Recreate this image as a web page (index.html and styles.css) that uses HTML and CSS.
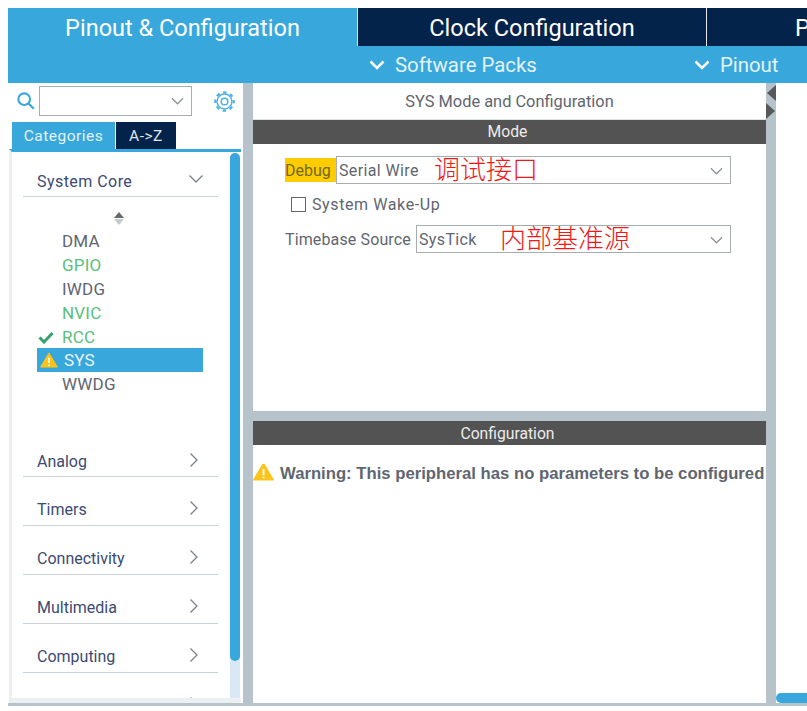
FILE: index.html
```html
<!DOCTYPE html>
<html lang="en">
<head>
<meta charset="utf-8">
<title>SYS Mode and Configuration</title>
<link rel="stylesheet" href="styles.css">
</head>
<body>
<div class="app">
  <header class="header">
    <nav class="tabs">
      <div class="tab tab-active">Pinout &amp; Configuration</div>
      <div class="tab tab-dark">Clock Configuration</div>
      <div class="tab tab-dark tab-clip">Project Manager</div>
    </nav>
    <div class="subbar">
      <div class="sub-item sub-packs"><svg class="sub-chev" viewBox="0 0 16 10"><path d="M1.500 1.500 8 8l6.500-6.500"/></svg>Software Packs</div>
      <div class="sub-item sub-pinout"><svg class="sub-chev" viewBox="0 0 16 10"><path d="M1.500 1.500 8 8l6.500-6.500"/></svg>Pinout</div>
    </div>
  </header>
  <main class="main">
    <aside class="left">
      <div class="search-row">
        <svg class="search-icon" viewBox="0 0 20 20"><circle cx="8" cy="8" r="6.500"/><path d="m12.700 12.700 6 6"/></svg>
        <div class="search-box"><svg class="chev-down" viewBox="0 0 14 8"><path d="M1 1l6 6 6-6"/></svg></div>
        <svg class="gear" viewBox="0 0 24 24"><circle class="gear-teeth" cx="12" cy="12" r="10.500"/><circle cx="12" cy="12" r="8.500"/><circle cx="12" cy="12" r="3.800"/></svg>
      </div>
      <div class="view-tabs">
        <div class="view-tab view-on">Categories</div>
        <div class="view-tab view-off">A-&gt;Z</div>
      </div>
      <div class="panel">
        <div class="list">
          <div class="cat cat-open"><span>System Core</span><svg class="cat-down" viewBox="0 0 14 8"><path d="M.5.500 7 7l6.500-6.500"/></svg></div>
          <div class="sorter"><i class="sort-up"></i><i class="sort-down"></i></div>
          <ul class="items">
            <li class="item">DMA</li>
            <li class="item item-green">GPIO</li>
            <li class="item">IWDG</li>
            <li class="item item-green">NVIC</li>
            <li class="item item-green"><svg class="check" viewBox="0 0 16 13"><path d="M1.500 6.500 6 11l8.500-9"/></svg>RCC</li>
            <li class="item item-sel"><svg class="warn-small" viewBox="0 0 20 18"><path class="warn-body" d="M10 1 19.500 17H.5z"/><path class="warn-mark" d="M10 6.500v6M10 14v1.500"/></svg>SYS</li>
            <li class="item">WWDG</li>
          </ul>
          <div class="cat cat-first"><span>Analog</span><svg class="cat-right" viewBox="0 0 8 14"><path d="M.5.500 7 7 .5 13.500"/></svg></div>
          <div class="cat"><span>Timers</span><svg class="cat-right" viewBox="0 0 8 14"><path d="M.5.500 7 7 .5 13.500"/></svg></div>
          <div class="cat"><span>Connectivity</span><svg class="cat-right" viewBox="0 0 8 14"><path d="M.5.500 7 7 .5 13.500"/></svg></div>
          <div class="cat"><span>Multimedia</span><svg class="cat-right" viewBox="0 0 8 14"><path d="M.5.500 7 7 .5 13.500"/></svg></div>
          <div class="cat"><span>Computing</span><svg class="cat-right" viewBox="0 0 8 14"><path d="M.5.500 7 7 .5 13.500"/></svg></div>
          <div class="cat"><span></span><svg class="cat-right" viewBox="0 0 8 14"><path d="M.5.500 7 7 .5 13.500"/></svg></div>
        </div>
        <div class="scroll"><div class="scroll-thumb"></div></div>
      </div>
    </aside>
    <div class="divider"></div>
    <section class="center">
      <div class="mode-pane">
        <div class="pane-title">SYS Mode and Configuration</div>
        <div class="bar">Mode</div>
        <div class="form">
          <div class="form-row row-debug">
            <label class="debug-label">Debug</label>
            <div class="select select-debug">Serial Wire<span class="note note-debug">调试接口</span><svg class="chev-down" viewBox="0 0 14 8"><path d="M1 1l6 6 6-6"/></svg></div>
          </div>
          <div class="form-row row-check">
            <span class="checkbox"></span><span>System Wake-Up</span>
          </div>
          <div class="form-row row-time">
            <label class="time-label">Timebase Source</label>
            <div class="select select-time">SysTick<span class="note note-time">内部基准源</span><svg class="chev-down" viewBox="0 0 14 8"><path d="M1 1l6 6 6-6"/></svg></div>
          </div>
        </div>
      </div>
      <div class="hsplit"></div>
      <div class="config-pane">
        <div class="bar">Configuration</div>
        <div class="warning"><svg class="warn-big" viewBox="0 0 20 18"><path class="warn-body" d="M10 1 19.500 17H.5z"/><path class="warn-mark" d="M10 6.500v6M10 14v1.500"/></svg><span>Warning: This peripheral has no parameters to be configured</span></div>
      </div>
    </section>
    <div class="divider divider-arrows">
      <svg class="arrows" viewBox="0 0 10 38"><path d="M10 2v16L1 10zM0 20l9 8-9 8z"/></svg>
    </div>
    <aside class="right"><div class="h-scroll"></div></aside>
  </main>
</div>
</body>
</html>
```
FILE: styles.css
```css
* { box-sizing: border-box; }
html, body { margin: 0; padding: 0; background: #fff; overflow: hidden; }
body { width: 807px; height: 711px; font-family: Roboto, "Liberation Sans", sans-serif; color: #5b6470; }
.app { margin: 8px 0 0 8px; width: 799px; height: 698px; display: flex; flex-direction: column; overflow: hidden; }
.header { flex: none; height: 75px; background: #38a8dc; }
.tabs { display: flex; height: 38px; }
.tab { height: 38px; display: flex; align-items: center; justify-content: center; color: #fff; font-size: 23.500px; flex: none; padding-top: 1px; }
.tab-active { width: 350px; background: #38a8dc; border-right: 1px solid #cfe4f0; }
.tab-dark { background: #03234b; border-right: 1px solid #e6ebf0; width: 349px; }
.tab-clip { flex: 1; width: auto; justify-content: flex-start; padding-left: 88px; border-right: 0; overflow: hidden; white-space: nowrap; }
.subbar { height: 37px; display: flex; align-items: center; color: #e3f2fa; font-size: 20.400px; position: relative; }
.sub-item { display: flex; align-items: center; }
.sub-packs { margin-left: 361px; }
.sub-pinout { margin-left: 157px; }
.sub-chev { width: 16px; height: 10px; margin-right: 10px; fill: none; stroke: #fff; stroke-width: 2.500; }

.main { flex: 1; display: flex; min-height: 0; border-bottom: 3px solid #b6c3cb; }
.left { width: 235px; flex: none; display: flex; flex-direction: column; }
.search-row { height: 39px; display: flex; align-items: center; flex: none; position: relative; padding: 0 0 3px 9px; }
.search-icon { width: 18px; height: 18px; fill: none; stroke: #38a8dc; stroke-width: 2.300; margin-right: 4px; }
.search-box { width: 153px; height: 30px; border: 1px solid #a5adb3; position: relative; }
.gear { width: 21px; height: 21px; margin-left: 22px; fill: none; stroke: #4fb3e2; stroke-width: 1.700; }
.gear-teeth { stroke-width: 2.600; stroke-dasharray: 4 4.250; stroke-dashoffset: 2; }
.chev-down { position: absolute; right: 7px; top: 10px; width: 13px; height: 8px; fill: none; stroke: #8b9196; stroke-width: 1.300; }
.view-tabs { display: flex; height: 27px; flex: none; padding-left: 4px; }
.view-tab { height: 27px; display: flex; align-items: center; justify-content: center; font-size: 15.500px; letter-spacing: .5px; }
.view-on { width: 103px; background: #38a8dc; color: #e3f2fa; margin-right: 1px; }
.view-off { width: 60px; background: #03234b; color: #dfe6ee; }
.panel { flex: 1; min-height: 0; border-top: 3px solid #38a8dc; border-left: 3px solid #edf0f2; margin-left: 1px; margin-right: 2px; display: flex; position: relative; overflow: hidden; border-bottom: 5px solid #edf0f2; }
.list { flex: none; width: 218px; overflow: hidden; padding: 17px 0 0 11px; }
.cat { width: 195px; height: 49px; display: flex; justify-content: space-between; align-items: flex-end; padding: 0 17px 5px 14px; border-bottom: 1px solid #c8d2d9; font-size: 16px; color: #3c4a72; position: relative; flex: none; }
.cat span { line-height: 20px; }
.cat-open { height: 28px; padding-bottom: 4px; padding-right: 15px; letter-spacing: .45px; }
.cat-first { height: 30px; padding-bottom: 4px; }
.cat-down { width: 14px; height: 8px; fill: none; stroke: #7c8287; stroke-width: 1.300; margin-bottom: 9px; }
.cat-right { width: 8px; height: 14px; fill: none; stroke: #7c8287; stroke-width: 1.300; margin-bottom: 5px; margin-right: 3px; }
.sorter { margin: 15px 0 0 91px; width: 11px; height: 14px; position: relative; }
.sort-up, .sort-down { position: absolute; left: 0; width: 0; height: 0; border-left: 5px solid transparent; border-right: 5px solid transparent; }
.sort-up { top: 0; border-bottom: 6px solid #63696e; }
.sort-down { top: 7px; border-top: 6px solid #c6cacd; }
.items { list-style: none; margin: 3.500px 0 51px 14px; padding: 0; }
.item { height: 23.800px; width: 166px; display: flex; align-items: center; padding-left: 25px; font-size: 17px; letter-spacing: .2px; color: #5f6670; position: relative; }
.item-green { color: #58c07c; }
.item-sel { background: #38a8dc; color: #eaf6fc; padding-left: 27px; }
.check { position: absolute; left: 1px; top: 6px; width: 16px; height: 13px; fill: none; stroke: #34a36b; stroke-width: 3; }
.warn-small { position: absolute; left: 3px; top: 4px; width: 18px; height: 16px; }
.warn-big { width: 21px; height: 19px; flex: none; margin: 0 6px 6px 0; }
.warn-body { fill: #fcc419; stroke: #fcc419; stroke-width: 1; stroke-linejoin: round; }
.warn-mark { fill: none; stroke: #fff; stroke-width: 1.800; }
.scroll { position: absolute; left: 218px; top: 1px; bottom: 0; width: 10px; background: #d8e8f5; border-radius: 5px 5px 0 0; }
.scroll-thumb { height: 508px; background: #38a8dc; border-radius: 5px; }
.divider { width: 10px; flex: none; background: #b6c3cb; position: relative; }
.arrows { position: absolute; left: 0; top: 0; width: 10px; height: 38px; fill: #55595c; }
.center { width: 513px; flex: none; display: flex; flex-direction: column; }
.mode-pane { height: 328px; flex: none; }
.mode-pane .bar { padding-bottom: 1px; }
.pane-title { height: 37px; display: flex; align-items: center; justify-content: center; font-size: 16.400px; color: #5f6670; border-bottom: 1px solid #dde2e5; padding-top: 1px; }
.bar { height: 24px; background: #535353; color: #ececec; font-size: 15.700px; display: flex; align-items: center; justify-content: center; padding-right: 4px; }
.form { padding: 12px 0 0 32px; position: relative; font-size: 16px; color: #5f6670; }
.form-row { display: flex; align-items: center; }
.row-debug { height: 28px; }
.debug-label { width: 51px; height: 24px; background: #ffcc00; display: flex; align-items: center; color: #6f6a20; }
.select { height: 28px; border: 1px solid #a5adb3; position: relative; display: flex; align-items: center; padding-left: 2px; background: #fff; letter-spacing: .37px; }
.select-debug { width: 395px; }
.select-time { width: 315px; }
.note { position: absolute; color: #f01818; font-family: "Noto Sans CJK SC", sans-serif; font-size: 26px; font-weight: 300; line-height: 28px; top: -3px; white-space: nowrap; letter-spacing: 0; }
.note-debug { left: 97px; }
.note-time { left: 83px; }
.row-check { height: 41px; padding-left: 6px; gap: 6px; letter-spacing: .6px; }
.checkbox { width: 15px; height: 15px; border: 1.500px solid #666; background: #fff; }
.row-time { height: 28px; }
.time-label { width: 131px; flex: none; letter-spacing: .13px; }
.hsplit { height: 10px; flex: none; background: #b6c3cb; }
.config-pane { flex: 1; }
.warning { display: flex; align-items: center; margin-top: 19px; height: 20px; font-family: "Liberation Sans", sans-serif; font-weight: 700; font-size: 16.700px; color: #5f6670; white-space: nowrap; overflow: hidden; }
.right { flex: 1; display: flex; flex-direction: column; justify-content: flex-end; }
.h-scroll { height: 10px; background: #38a8dc; border-radius: 5px 0 0 5px; }
```
